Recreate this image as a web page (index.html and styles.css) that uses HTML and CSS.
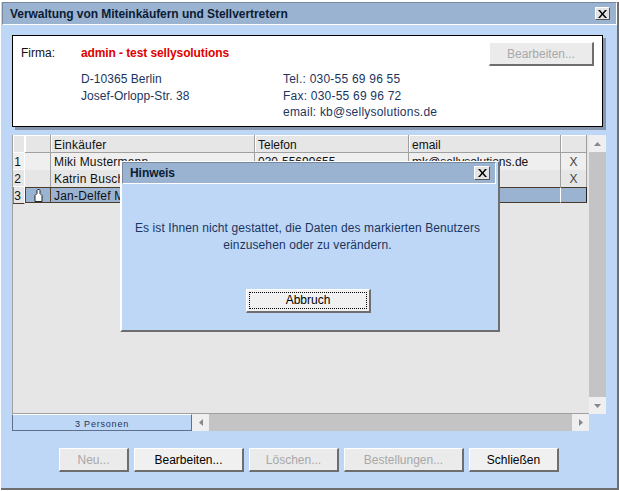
FILE: index.html
```html
<!DOCTYPE html>
<html lang="de">
<head>
<meta charset="utf-8">
<title>Verwaltung von Miteinkäufern und Stellvertretern</title>
<link rel="stylesheet" href="styles.css">
</head>
<body>
<div class="window">
  <div class="titlebar">
    <span class="title">Verwaltung von Miteinkäufern und Stellvertretern</span>
    <span class="close"><svg width="9" height="8" viewBox="0 0 9 8"><path d="M0 0h2l2.500 3 2.500-3h2L5.500 4 9 8H7L4.500 5 2 8H0l3.500-4z" fill="#000"/></svg></span>
  </div>
  <div class="content">
    <section class="company">
      <div class="firma-row">
        <span class="firma-label">Firma:</span>
        <span class="firma-name">admin - test sellysolutions</span>
        <button class="btn disabled edit-top">Bearbeiten...</button>
      </div>
      <div class="address">
        <div class="addr-col">
          <div>D-10365 Berlin</div>
          <div>Josef-Orlopp-Str. 38</div>
        </div>
        <div class="contact-col">
          <div>Tel.: 030-55 69 96 55</div>
          <div>Fax: 030-55 69 96 72</div>
          <div>email: kb@sellysolutions.de</div>
        </div>
      </div>
    </section>
    <section class="table">
      <div class="table-main">
        <div class="grid">
          <div class="row head">
            <div class="cell c-num"></div>
            <div class="cell c-icon"></div>
            <div class="cell c-name">Einkäufer</div>
            <div class="cell c-tel">Telefon</div>
            <div class="cell c-mail">email</div>
            <div class="cell c-x"></div>
          </div>
          <div class="row light">
            <div class="cell c-num">1</div>
            <div class="cell c-icon"></div>
            <div class="cell c-name">Miki Mustermann</div>
            <div class="cell c-tel">030-55699655</div>
            <div class="cell c-mail">mk@sellysolutions.de</div>
            <div class="cell c-x">X</div>
          </div>
          <div class="row">
            <div class="cell c-num">2</div>
            <div class="cell c-icon"></div>
            <div class="cell c-name">Katrin Buschmann</div>
            <div class="cell c-tel"></div>
            <div class="cell c-mail"></div>
            <div class="cell c-x">X</div>
          </div>
          <div class="row selected">
            <div class="cell c-num">3</div>
            <div class="cell c-icon"><svg width="9" height="13" viewBox="0 0 9 13"><path d="M3 4.500V1.500c0-.5.500-1 1-1h1c.5 0 1 .5 1 1v3l2 2v6H1v-6z" fill="#fff" stroke="#222" stroke-width="1"/></svg></div>
            <div class="cell c-name">Jan-Delfef Meier</div>
            <div class="cell c-tel"></div>
            <div class="cell c-mail"></div>
            <div class="cell c-x"></div>
          </div>
        </div>
        <div class="hbar">
          <div class="count">3 Personen</div>
          <div class="arrow-btn"><svg width="4" height="7" viewBox="0 0 4 7"><path d="M4 0v7L0 3.500z" fill="#888"/></svg></div>
          <div class="track"></div>
          <div class="arrow-btn"><svg width="4" height="7" viewBox="0 0 4 7"><path d="M0 0v7l4-3.500z" fill="#888"/></svg></div>
        </div>
      </div>
      <div class="vbar">
        <div class="arrow-v"><svg width="7" height="4" viewBox="0 0 7 4"><path d="M0 4h7L3.500 0z" fill="#888"/></svg></div>
        <div class="vtrack"></div>
        <div class="arrow-v"><svg width="7" height="4" viewBox="0 0 7 4"><path d="M0 0h7L3.500 4z" fill="#888"/></svg></div>
      </div>
    </section>
    <div class="actions">
      <button class="btn disabled a-new">Neu...</button>
      <button class="btn a-edit">Bearbeiten...</button>
      <button class="btn disabled a-del">Löschen...</button>
      <button class="btn disabled a-ord">Bestellungen...</button>
      <button class="btn a-close">Schließen</button>
    </div>
  </div>
</div>
<div class="dialog">
  <div class="titlebar dlg-bar">
    <span class="title dlg-title">Hinweis</span>
    <span class="close dlg-close"><svg width="9" height="8" viewBox="0 0 9 8"><path d="M0 0h2l2.500 3 2.500-3h2L5.500 4 9 8H7L4.500 5 2 8H0l3.500-4z" fill="#000"/></svg></span>
  </div>
  <div class="dlg-body">
    <p class="dlg-text">Es ist Ihnen nicht gestattet, die Daten des markierten Benutzers<br>einzusehen oder zu verändern.</p>
    <button class="btn dlg-btn"><span class="focus">Abbruch</span></button>
  </div>
</div>
</body>
</html>
```
FILE: styles.css
```css
* { box-sizing: border-box; }
html, body { margin: 0; padding: 0; }
body {
  width: 619px;
  height: 491px;
  position: relative;
  overflow: hidden;
  background: #fff;
  font-family: "Liberation Sans", Arial, sans-serif;
  font-size: 12px;
  color: #1b3560;
}
.window {
  width: 618px;
  height: 488px;
  margin: 2px 0 0 1px;
  border-right: 2px solid #6e6e6e;
  border-bottom: 2px solid #6e6e6e;
  background: #bed7f6;
  display: flex;
  flex-direction: column;
}
.titlebar {
  height: 23px;
  flex: none;
  margin: 0 0 0 1px;
  background: #99b3d0;
  border: 1px solid #fff;
  border-top-color: #76899f;
  border-left-color: #76899f;
  display: flex;
  align-items: center;
  justify-content: space-between;
  padding: 0 6px 0 7px;
}
.title { font-weight: bold; font-size: 12px; color: #0c1c36; letter-spacing: -0.05px; }
.close {
  width: 15px;
  height: 13px;
  background: #e4e4e4;
  border: 1px solid;
  border-color: #fff #555 #555 #fff;
  display: flex;
  align-items: center;
  justify-content: center;
}
.content {
  flex: 1;
  padding: 10px 0 0 11px;
  display: flex;
  flex-direction: column;
}
.company {
  width: 591px;
  height: 92px;
  flex: none;
  background: #fff;
  border: 1px solid #000;
  box-shadow: 3px 3px 0 #8596ad;
  padding: 6px 8px 0 8px;
}
.firma-row { display: flex; align-items: flex-start; height: 29px; }
.firma-label { width: 60px; color: #111; padding-top: 4px; }
.firma-name { flex: 1; font-weight: bold; color: #e00000; padding-top: 4px; letter-spacing: -0.1px; }
.address { display: flex; padding-left: 60px; line-height: 16.5px; }
.addr-col { width: 202px; letter-spacing: 0.05px; }
.contact-col { letter-spacing: 0.22px; }
.btn {
  font-family: inherit;
  font-size: 12px;
  height: 24px;
  padding: 0;
  background: #f0f0f0;
  color: #000;
  border: 1px solid;
  border-color: #fff #6e6e6e #6e6e6e #fff;
  border-width: 1px 2px 2px 1px;
}
.btn.disabled { color: #a8a8a8; background: #ebebeb; }
.edit-top { width: 105px; flex: none; }
.table {
  display: flex;
  margin-top: 8px;
  width: 594px;
  flex: none;
}
.table-main { width: 577px; flex: none; }
.grid {
  height: 279px;
  background: #e6e6e6;
  border-left: 1px solid #a0a0a0;
  border-bottom: 1px solid #a0a0a0;
}
.row { display: flex; align-items: flex-start; height: 17px; width: 574px; color: #111; }
.row.head { height: 18px; }
.cell {
  height: 17px;
  border-right: 1px solid #a0a0a0;
  padding-left: 3px;
  line-height: 18px;
  white-space: nowrap;
  overflow: hidden;
  flex: none;
}
.row.light .cell { background: #efefef; }
.head .cell {
  height: 18px;
  background: #e6e6e6;
  border-bottom: 1px solid #a0a0a0;
  box-shadow: inset 1px 1px 0 #fff;
  line-height: 20px;
}
.row .c-num {
  width: 12px;
  padding: 0 2px 0 0;
  text-align: center;
  background: #e6e6e6;
  border-right: 1px solid #fff;
  border-bottom: 1px solid #fff;
}
.c-icon { width: 26px; display: flex; justify-content: center; align-items: center; padding: 0; }
.c-name { width: 204px; letter-spacing: 0.2px; }
.c-tel { width: 154px; }
.c-mail { width: 152px; }
.c-x { width: 26px; text-align: center; padding: 0; color: #444; }
.selected .cell {
  height: 16px;
  background: #99b3d0;
  border-top: 1px solid #4a3a2a;
  border-bottom: 1px solid #4a3a2a;
  border-right-color: #fff;
  line-height: 16px;
}
.selected .c-icon { border-left: 1px solid #5a4028; border-right-color: #5a4028; }
.selected .c-name { border-right-color: #99b3d0; }
.selected .c-x { border-right-color: #222; }
.row.selected .c-num { height: 17px; border-top: 0; line-height: 18px; background: #e6e6e6; box-shadow: inset 1px 0 0 #888; }
.hbar { display: flex; height: 17px; }
.count {
  width: 180px;
  font-size: 9px;
  letter-spacing: 0.8px;
  text-align: center;
  line-height: 19px;
  border-top: 1px solid #fff;
  border-bottom: 1px solid #5f718a;
  border-right: 1px solid #5f718a;
  border-left: 1px solid #5f718a;
}
.arrow-btn {
  width: 17px;
  background: #efefef;
  display: flex;
  align-items: center;
  justify-content: center;
  flex: none;
}
.track { flex: 1; background: #c4c4c4; }
.vbar { width: 17px; flex: none; display: flex; flex-direction: column; height: 279px; background: #c4c4c4; }
.arrow-v { height: 17px; background: #efefef; display: flex; align-items: center; justify-content: center; }
.vtrack { flex: 1; }
.actions { display: flex; margin-top: 17px; padding-left: 47px; gap: 5px; }
.a-new { width: 70px; }
.a-edit { width: 110px; }
.a-del { width: 90px; }
.a-ord { width: 120px; }
.a-close { width: 90px; }
.dialog {
  position: absolute;
  left: 120px;
  top: 161px;
  width: 380px;
  height: 171px;
  background: #bed7f6;
  border-top: 1px solid #fff;
  border-left: 2px solid #fff;
  border-right: 2px solid #6e6e6e;
  border-bottom: 2px solid #6e6e6e;
  display: flex;
  flex-direction: column;
}
.dlg-bar { height: 22px; margin: 0 2px 0 0; padding: 0 5px 0 7px; }
.dlg-close { width: 16px; height: 14px; }
.dlg-body { flex: 1; display: flex; flex-direction: column; }
.dlg-text { margin: 36px 0 0; padding-right: 5px; text-align: center; line-height: 17px; letter-spacing: 0.1px; }
.dlg-btn { align-self: flex-start; margin: 35px 0 0 124px; width: 125px; height: 24px; padding: 2px; flex: none; }
.focus { display: block; height: 100%; border: 1px dotted #000; line-height: 15px; }
```
